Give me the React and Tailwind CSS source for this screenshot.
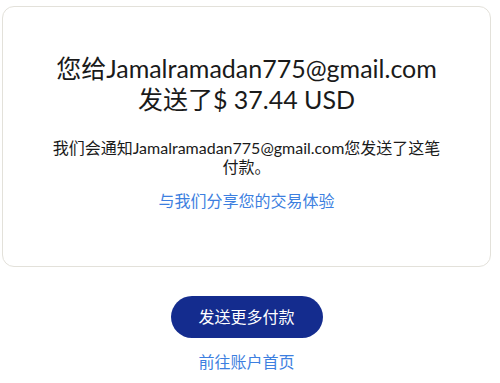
export default function App() {
  return (
    <div
      className="w-[500px] h-[383px] bg-white overflow-hidden"
      style={{ fontFamily: 'Lato, "Noto Sans CJK SC", sans-serif' }}
    >
      <div className="w-[491px] pl-[2px] pt-[6px]">
        <div className="h-[261px] rounded-[12px] border border-[#e3e1da] flex flex-col items-center pt-[46px]">
          <h1 className="text-[25px] leading-[31px] text-[#1a1a1a] text-center">
            您给Jamalramadan775@gmail.com
            <br />
            发送了$ 37.44 USD
          </h1>
          <p className="mt-[23px] w-[400px] text-[16px] leading-[19px] text-[#1a1a1a] text-center">
            我们会通知Jamalramadan775@gmail.com您发送了这笔付款。
          </p>
          <a className="mt-[15px] text-[16px] leading-[20px] text-[#3d7fe0]">与我们分享您的交易体验</a>
        </div>
        <div className="flex flex-col items-center">
          <button className="mt-[29px] w-[152px] h-[42px] rounded-full bg-[#142c8e] text-white text-[16px]">
            发送更多付款
          </button>
          <a className="mt-[14px] text-[16px] leading-[20px] text-[#3d7fe0]">前往账户首页</a>
        </div>
      </div>
    </div>
  );
}
